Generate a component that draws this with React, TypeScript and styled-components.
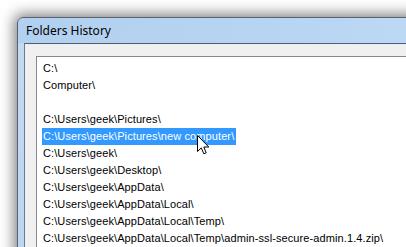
import React from "react";
import styled, { createGlobalStyle } from "styled-components";

const GlobalStyle = createGlobalStyle`
  html, body {
    margin: 0;
    padding: 0;
    background: #ffffff;
    overflow: hidden;
  }
`;

const folders = [
  "C:\\",
  "Computer\\",
  "",
  "C:\\Users\\geek\\Pictures\\",
  "C:\\Users\\geek\\Pictures\\new computer\\",
  "C:\\Users\\geek\\",
  "C:\\Users\\geek\\Desktop\\",
  "C:\\Users\\geek\\AppData\\",
  "C:\\Users\\geek\\AppData\\Local\\",
  "C:\\Users\\geek\\AppData\\Local\\Temp\\",
  "C:\\Users\\geek\\AppData\\Local\\Temp\\admin-ssl-secure-admin.1.4.zip\\",
];

const Page = styled.div`
  position: relative;
  width: 406px;
  height: 247px;
  overflow: hidden;
  padding: 17px 0 0 17px;
  box-sizing: border-box;
  background: #ffffff;
`;

const Window = styled.div`
  width: 480px;
  height: 300px;
  border: 1px solid #59626e;
  border-radius: 6px 0 0 0;
  background: linear-gradient(100deg, #b2d0ef 0%, #b8d5f3 55%, #c4ddf7 100%);
  box-shadow: -1px -1px 14px 2px rgba(0, 0, 0, 0.5);
  display: flex;
  flex-direction: column;
`;

const TitleBar = styled.div`
  height: 25px;
  padding-left: 8px;
  display: flex;
  align-items: center;
  font-family: "Segoe UI", "Noto Sans", sans-serif;
  font-size: 12px;
  color: #000000;
`;

const Frame = styled.div`
  flex: 1;
  padding-left: 6px;
  display: flex;
  background: linear-gradient(180deg, #c2daf2 0%, #bcd5ef 100%);
`;

const Client = styled.div`
  flex: 1;
  border-top: 1px solid #4f5e73;
  border-left: 1px solid #6d7a8c;
  box-shadow: inset 0 1px 0 #e8eef5;
  background: #f0f0f0;
  padding: 12px 0 0 11px;
`;

const ListBox = styled.div`
  height: 100%;
  border-top: 1px solid #828790;
  border-left: 1px solid #828790;
  background: #ffffff;
  padding: 3px 0 0 5px;
  font-family: "Liberation Sans", Arial, sans-serif;
  font-size: 11px;
  letter-spacing: 0.1px;
  color: #000000;
`;

const Row = styled.div`
  height: 17px;
  line-height: 17px;
  white-space: nowrap;
`;

const Item = styled.span<{ $selected?: boolean }>`
  display: inline-block;
  padding: 0 2px 0 1px;
  background: ${(p) => (p.$selected ? "#3399ff" : "transparent")};
  color: ${(p) => (p.$selected ? "#ffffff" : "#000000")};
`;

const Cursor = styled.svg`
  position: absolute;
  left: 197px;
  top: 135px;
`;

export default function App() {
  return (
    <>
      <GlobalStyle />
      <Page>
        <Window>
          <TitleBar>Folders History</TitleBar>
          <Frame>
            <Client>
              <ListBox>
                {folders.map((f, i) => (
                  <Row key={i}>
                    <Item $selected={i === 4}>{f}</Item>
                  </Row>
                ))}
              </ListBox>
            </Client>
          </Frame>
        </Window>
        <Cursor width="13" height="21" viewBox="0 0 13 21">
          <path
            d="M0.5 0.5 L0.5 16.5 L4.3 12.9 L6.8 18.8 L9.2 17.8 L6.8 12 L11.8 12 Z"
            fill="#ffffff"
            stroke="#000000"
            strokeWidth="1"
            strokeLinejoin="miter"
          />
        </Cursor>
      </Page>
    </>
  );
}
